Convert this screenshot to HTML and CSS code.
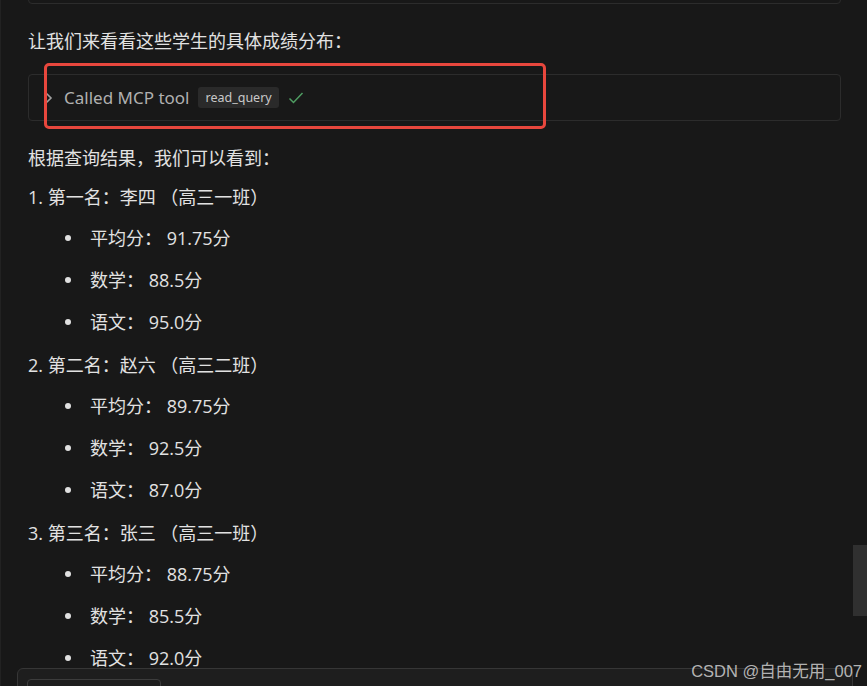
FILE: index.html
```html
<!DOCTYPE html>
<html lang="zh-CN">
  <head>
    <meta charset="UTF-8">
    <meta name="viewport" content="width=device-width, initial-scale=1.0">
    <title>MCP 查询结果</title>
    <link rel="stylesheet" href="styles.css">
  </head>
  <body>
    <div class="chat">
      <div class="prev-card"></div>

      <p class="intro">让我们来看看这些学生的具体成绩分布：</p>

      <div class="tool-call">
        <svg class="chevron" width="8" height="12" viewBox="0 0 8 12">
          <path d="M1.5 1.5 L6 6 L1.5 10.5" fill="none" stroke="#a0a0a0" stroke-width="1.6"/>
        </svg>
        <span class="tool-label">Called MCP tool</span>
        <span class="tool-name">read_query</span>
        <svg class="check" width="16" height="14" viewBox="0 0 16 14">
          <path d="M1.5 7.5 L5.5 11.5 L14.5 2" fill="none" stroke="#4f9d62" stroke-width="1.5"/>
        </svg>
      </div>

      <p class="lead">根据查询结果，我们可以看到：</p>

      <ol class="ranking">
        <li>
          <div class="rank-title">1. 第一名：李四 （高三一班）</div>
          <ul class="scores">
            <li>平均分： 91.75分</li>
            <li>数学： 88.5分</li>
            <li>语文： 95.0分</li>
          </ul>
        </li>
        <li>
          <div class="rank-title">2. 第二名：赵六 （高三二班）</div>
          <ul class="scores">
            <li>平均分： 89.75分</li>
            <li>数学： 92.5分</li>
            <li>语文： 87.0分</li>
          </ul>
        </li>
        <li>
          <div class="rank-title">3. 第三名：张三 （高三一班）</div>
          <ul class="scores">
            <li>平均分： 88.75分</li>
            <li>数学： 85.5分</li>
            <li>语文： 92.0分</li>
          </ul>
        </li>
      </ol>
    </div>

    <!-- red annotation drawn over the tool call -->
    <div class="highlight"></div>

    <div class="composer">
      <div class="composer-chip"></div>
    </div>

    <div class="scrollbar"></div>
    <div class="watermark">CSDN @自由无用_007</div>
  </body>
</html>
```

FILE: styles.css
```css
:root {
  --bg: #181818;
  --text: #e2e2e2;
  --muted: #b0b0b0;
  --border: #2c2c2c;
}

html, body {
  margin: 0;
  height: 100%;
}

body {
  position: relative;
  overflow: hidden;
  background: var(--bg);
  color: var(--text);
  font-family: "Open Sans", "Noto Sans CJK SC", sans-serif;
  font-size: 18px;
  line-height: 26px;
  text-spacing-trim: space-all;
  border-left: 1px solid #222;
  box-sizing: border-box;
}

.chat {
  padding-left: 27px;
  width: 813px;
}

.prev-card {
  margin-top: -20px;
  height: 22px;
  border: 1px solid var(--border);
  border-radius: 4px;
}

.intro {
  margin: 24px 0 0;
}

.tool-call {
  margin-top: 20px;
  height: 45px;
  border: 1px solid var(--border);
  border-radius: 4px;
  display: flex;
  align-items: center;
  padding-left: 16px;
}

.chevron {
  margin-right: 11px;
}

.tool-label {
  color: var(--muted);
  font-family: "Noto Sans", sans-serif;
  font-size: 17px;
}

.tool-name {
  margin-left: 9px;
  padding: 0 7px;
  height: 21px;
  line-height: 21px;
  font-family: "Noto Sans", sans-serif;
  font-size: 12.5px;
  color: #c8c8c8;
  background: #2a2a2a;
  border-radius: 3px;
}

.check {
  margin-left: 9px;
}

.lead {
  margin: 24px 0 0;
}

.ranking {
  list-style: none;
  margin: 13px 0 0;
  padding: 0;
}

.ranking > li + li {
  margin-top: 17px;
}

.scores {
  list-style: none;
  margin: 15px 0 0;
  padding: 0;
}

.scores li {
  display: flex;
  align-items: center;
  white-space: pre;
}

.scores li + li {
  margin-top: 16px;
}

.scores li::before {
  content: "";
  width: 6px;
  height: 6px;
  border-radius: 50%;
  background: #e0e0e0;
  margin-left: 37px;
  margin-right: 19px;
}

.highlight {
  position: absolute;
  left: 43px;
  top: 63px;
  width: 502px;
  height: 66px;
  box-sizing: border-box;
  border: 3px solid #e8473d;
  border-radius: 5px;
}

.composer {
  position: absolute;
  left: 16px;
  top: 668px;
  width: 836px;
  height: 40px;
  box-sizing: border-box;
  background: #1e1e1e;
  border: 1px solid #363636;
  border-radius: 6px;
  padding: 10px 0 0 9px;
}

.composer-chip {
  width: 132px;
  height: 20px;
  border: 1px solid #3c3c3c;
  border-radius: 4px;
}

.scrollbar {
  position: absolute;
  right: 0;
  top: 545px;
  width: 14px;
  height: 71px;
  background: #303030;
}

.watermark {
  position: absolute;
  right: 5px;
  top: 658px;
  font-family: "Liberation Sans", "Noto Sans CJK SC", sans-serif;
  font-size: 16.5px;
  color: rgba(220, 220, 220, 0.8);
}
```
